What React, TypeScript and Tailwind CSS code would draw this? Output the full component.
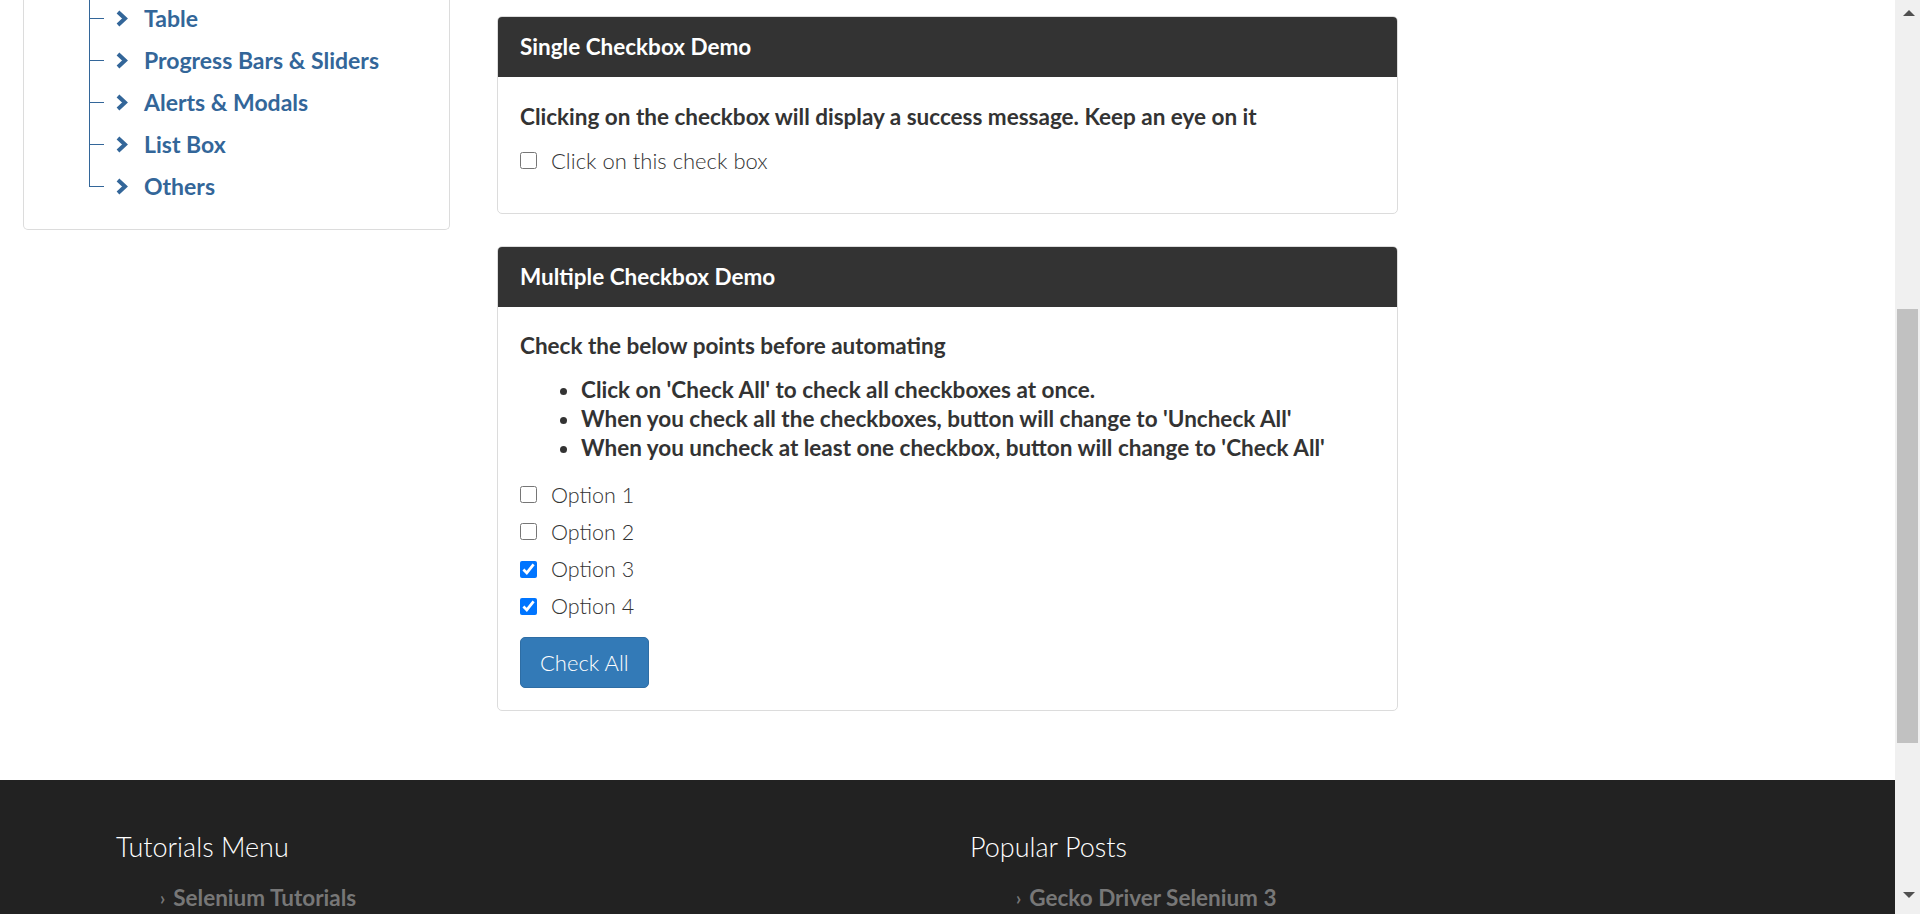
import { useState } from 'react';

const menu = ['Table', 'Progress Bars & Sliders', 'Alerts & Modals', 'List Box', 'Others'];
const points = [
    "Click on 'Check All' to check all checkboxes at once.",
    "When you check all the checkboxes, button will change to 'Uncheck All'",
    "When you uncheck at least one checkbox, button will change to 'Check All'",
];

function Chevron() {
    return (
        <svg width="13" height="17" viewBox="0 0 13 17" className="shrink-0">
            <polyline points="3,2 10,8.5 3,15" fill="none" stroke="#336699" strokeWidth="4" strokeLinejoin="miter" />
        </svg>
    );
}

function Scrollbar() {
    return (
        <div className="flex w-[25px] shrink-0 flex-col bg-[#f0f0f0]">
            <div className="flex h-[25px] items-start justify-center pt-[10px] pl-[2px]">
                <div className="h-0 w-0 border-x-[6px] border-b-[6px] border-x-transparent border-b-[#505050]" />
            </div>
            <div className="flex-1 pt-[284px] pl-[2px] pr-[2px]">
                <div className="h-[434px] w-full bg-[#c1c1c1]" />
            </div>
            <div className="flex h-[25px] items-start justify-center pt-[3px] pl-[2px]">
                <div className="h-0 w-0 border-x-[6px] border-t-[6px] border-x-transparent border-t-[#505050]" />
            </div>
        </div>
    );
}

export default function App() {
    const [single, setSingle] = useState(false);
    const [opts, setOpts] = useState([false, false, true, true]);
    const all = opts.every(Boolean);

    return (
        <div className="flex h-[914px] w-full overflow-hidden bg-white font-['Lato',sans-serif] text-[#333]">
            <div className="flex min-w-0 flex-1 flex-col">
                <div className="flex h-[780px] shrink-0">
                    <aside className="ml-[23px] h-[230px] w-[427px] shrink-0 rounded-b-[5px] border-x border-b border-[#dcdcdc]">
                        <ul className="-mt-[3px] ml-[65px]">
                            {menu.map((item, i) => (
                                <li key={item} className="flex h-[42px] items-stretch">
                                    <div className="flex w-[15px] shrink-0 flex-col">
                                        <div className="flex-1 border-b border-l border-[#336699]" />
                                        <div className={i < menu.length - 1 ? 'flex-1 border-l border-[#336699]' : 'flex-1'} />
                                    </div>
                                    <a href="#" className="ml-[11px] flex items-center gap-[16px] text-[23px] font-bold text-[#336699]">
                                        <Chevron />
                                        {item}
                                    </a>
                                </li>
                            ))}
                        </ul>
                    </aside>

                    <main className="ml-[47px] flex w-[901px] shrink-0 flex-col gap-[32px] pt-[16px]">
                        <section className="overflow-hidden rounded-[5px] border border-[#dcdcdc]">
                            <div className="flex h-[60px] items-center bg-[#333] px-[22px] text-[22.5px] font-bold text-white">
                                Single Checkbox Demo
                            </div>
                            <div className="px-[22px] pt-[27px] pb-[40px]">
                                <p className="text-[22.5px] leading-[25px] font-bold">
                                    Clicking on the checkbox will display a success message. Keep an eye on it
                                </p>
                                <label className="mt-[19px] flex h-[25px] items-center gap-[14px] text-[22px] font-light">
                                    <input
                                        type="checkbox"
                                        checked={single}
                                        onChange={() => setSingle(!single)}
                                        className="m-0 h-[17px] w-[17px] accent-[#0075ff]"
                                    />
                                    Click on this check box
                                </label>
                            </div>
                        </section>

                        <section className="overflow-hidden rounded-[5px] border border-[#dcdcdc]">
                            <div className="flex h-[60px] items-center bg-[#333] px-[22px] text-[22.5px] font-bold text-white">
                                Multiple Checkbox Demo
                            </div>
                            <div className="px-[22px] pt-[26px] pb-[22px]">
                                <p className="text-[22.5px] leading-[25px] font-bold">
                                    Check the below points before automating
                                </p>
                                <ul className="mt-[17px] list-disc pl-[61px] text-[22.5px] leading-[29px] font-bold">
                                    {points.map((p) => (
                                        <li key={p}>{p}</li>
                                    ))}
                                </ul>
                                <div className="mt-[14px] flex flex-col">
                                    {opts.map((on, i) => (
                                        <label key={i} className="flex h-[37.3px] items-center gap-[14px] text-[21.5px] font-light">
                                            <input
                                                type="checkbox"
                                                checked={on}
                                                onChange={() => setOpts(opts.map((v, j) => (j === i ? !v : v)))}
                                                className="m-0 h-[17px] w-[17px] accent-[#0075ff]"
                                            />
                                            Option {i + 1}
                                        </label>
                                    ))}
                                </div>
                                <button
                                    onClick={() => setOpts(opts.map(() => !all))}
                                    className="mt-[12px] h-[51px] rounded-[5px] border border-[#2e6da4] bg-[#337ab7] px-[19px] text-[22px] font-light text-white"
                                >
                                    {all ? 'Uncheck All' : 'Check All'}
                                </button>
                            </div>
                        </section>
                    </main>
                </div>

                <footer className="flex flex-1 bg-[#222] pt-[50px] pl-[116px]">
                    <div className="w-[854px]">
                        <h3 className="text-[27px] leading-[34px] font-light text-white">Tutorials Menu</h3>
                        <a href="#" className="mt-[20px] ml-[44px] flex items-center gap-[8px] text-[22.5px] leading-[28px] font-bold text-[#777]">
                            <span className="text-[18px]">›</span>
                            Selenium Tutorials
                        </a>
                    </div>
                    <div>
                        <h3 className="text-[27px] leading-[34px] font-light text-white">Popular Posts</h3>
                        <a href="#" className="mt-[20px] ml-[46px] flex items-center gap-[8px] text-[22.5px] leading-[28px] font-bold text-[#777]">
                            <span className="text-[18px]">›</span>
                            Gecko Driver Selenium 3
                        </a>
                    </div>
                </footer>
            </div>
            <Scrollbar />
        </div>
    );
}
